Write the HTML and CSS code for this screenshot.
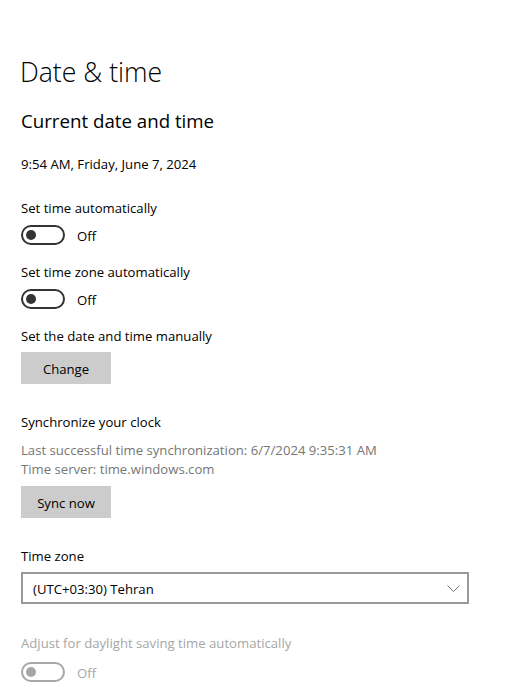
FILE: index.html
```html
<!DOCTYPE html>
<html lang="en">
<head>
<meta charset="utf-8">
<title>Date &amp; time</title>
<link rel="stylesheet" href="styles.css">
</head>
<body>
<main class="page">
  <h1 class="title">Date &amp; time</h1>
  <h2 class="subtitle">Current date and time</h2>
  <p class="text now">9:54 AM, Friday, June 7, 2024</p>

  <p class="text label first">Set time automatically</p>
  <div class="toggle-row">
    <span class="toggle"><span class="knob"></span></span>
    <span class="state">Off</span>
  </div>

  <p class="text label">Set time zone automatically</p>
  <div class="toggle-row">
    <span class="toggle"><span class="knob"></span></span>
    <span class="state">Off</span>
  </div>

  <p class="text label">Set the date and time manually</p>
  <button class="btn" type="button">Change</button>

  <p class="text section">Synchronize your clock</p>
  <div class="sync-info">
    <p class="text secondary">Last successful time synchronization: 6/7/2024 9:35:31 AM</p>
    <p class="text secondary">Time server: time.windows.com</p>
  </div>
  <button class="btn sync" type="button">Sync now</button>

  <p class="text section tz">Time zone</p>
  <div class="select">
    <span class="select-value">(UTC+03:30) Tehran</span>
    <svg class="chevron" width="13" height="7" viewBox="0 0 13 7" aria-hidden="true"><path d="M0.5 0.5 L6.5 6.5 L12.5 0.5" fill="none" stroke="#777" stroke-width="1"/></svg>
  </div>

  <p class="text label disabled dst">Adjust for daylight saving time automatically</p>
  <div class="toggle-row disabled">
    <span class="toggle"><span class="knob"></span></span>
    <span class="state">Off</span>
  </div>
</main>
</body>
</html>
```

FILE: styles.css
```css
html, body {
  margin: 0;
  padding: 0;
  background: #fff;
}

body {
  font-family: "Open Sans", "Noto Sans", sans-serif;
  color: #000;
}

.page {
  padding: 52px 0 0 21px;
  display: flex;
  flex-direction: column;
  align-items: flex-start;
}

.title {
  margin: 0 0 0 -1px;
  font-size: 26.6px;
  font-weight: 300;
  line-height: 40px;
  height: 40px;
}

.subtitle {
  margin: 15px 0 0 0;
  font-size: 18.7px;
  font-weight: 400;
  line-height: 28px;
  height: 28px;
}

.text {
  box-sizing: border-box;
  margin: 0;
  padding-top: 1px;
  font-size: 13.15px;
  line-height: 20px;
  height: 20px;
  white-space: nowrap;
}

.now { margin-top: 18px; }

.label.first { margin-top: 24px; }
.label { margin-top: 16px; }

.toggle-row {
  margin-top: 8px;
  display: flex;
  align-items: center;
  height: 20px;
}

.toggle {
  box-sizing: border-box;
  width: 44px;
  height: 20px;
  border: 2px solid #333;
  border-radius: 10px;
  display: flex;
  align-items: center;
  padding-left: 3px;
}

.knob {
  width: 10px;
  height: 10px;
  border-radius: 50%;
  background: #333;
}

.state {
  margin-left: 12px;
  padding-top: 2px;
  font-size: 13.15px;
  line-height: 20px;
}

.btn {
  margin-top: 7px;
  width: 90px;
  height: 32px;
  border: none;
  background: #ccc;
  font-family: inherit;
  font-size: 13.15px;
  color: #000;
  padding: 1px 0 0 0;
}

.section { margin-top: 27px; }

.sync-info {
  margin-top: 8px;
  display: flex;
  flex-direction: column;
}

.secondary {
  color: #767676;
  padding-top: 2px;
  line-height: 19px;
  height: 19px;
}

.btn.sync { margin-top: 9px; }

.tz { margin-top: 27px; }

.select {
  margin-top: 7px;
  box-sizing: border-box;
  width: 448px;
  height: 32px;
  border: 2px solid #999;
  display: flex;
  align-items: center;
  justify-content: space-between;
  padding: 1px 7px 0 10px;
}

.select-value {
  font-size: 13.15px;
}

.chevron { display: block; margin-top: -1px; }

.dst { margin-top: 28px; }

.disabled { color: #a6a6a6; }

.toggle-row.disabled { margin-top: 10px; }

.toggle-row.disabled .toggle { border-color: #a6a6a6; }
.toggle-row.disabled .knob { background: #a6a6a6; }
.toggle-row.disabled .state { color: #a6a6a6; }
```
